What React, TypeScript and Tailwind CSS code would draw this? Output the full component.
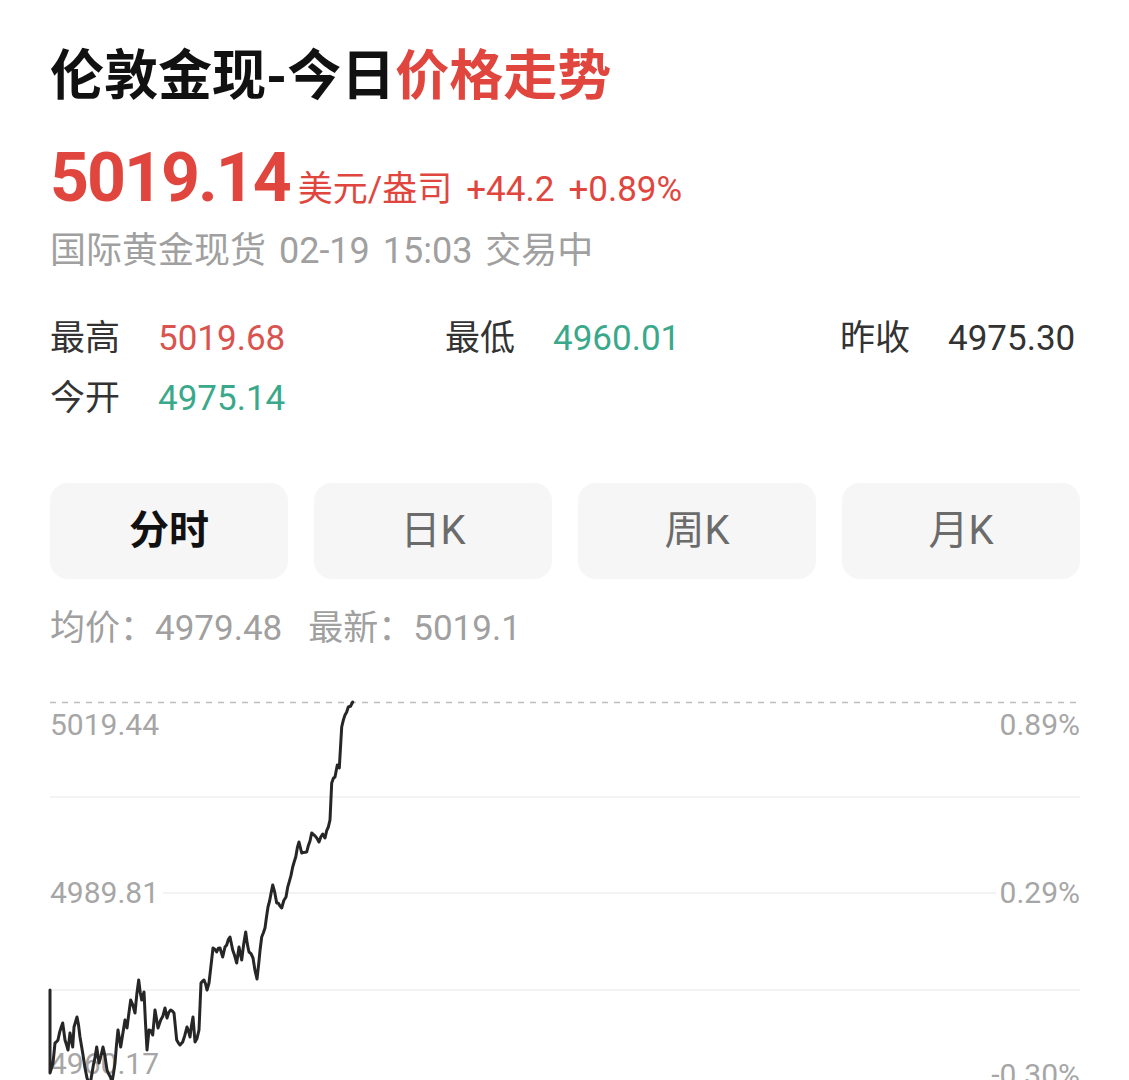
import React from 'react';

const font = { fontFamily: 'Roboto, "Noto Sans CJK SC", sans-serif' };

// chart trace, svg coords (x from left edge of chart, y from the dashed top line)
const trace: [number, number][] = [
  [0, 288], [0, 371], [3, 361], [5, 341], [8, 338], [12.7, 321], [15, 338], [18, 348],
  [20, 331], [22.7, 345], [24, 325], [27, 315], [30, 335], [32.7, 351], [37, 376], [40, 383],
  [46.7, 345], [49, 361], [53, 345], [57, 368], [62, 380], [65, 361], [68, 328], [70.7, 345],
  [75, 318], [77, 326], [80.7, 298], [85, 311], [88.7, 278], [91.7, 298], [94, 290], [97, 348],
  [99, 328], [102.7, 333], [105, 308], [108, 326], [110.7, 318], [115, 306], [117, 316],
  [120.7, 308], [124, 311], [126.7, 338], [130, 343], [132.7, 340], [137, 325], [140, 335],
  [143, 315], [145, 340], [149, 328], [151, 281], [154, 278], [157, 288], [159, 281],
  [163, 246], [166.7, 250], [170, 246], [172.7, 255], [175, 245], [180, 235], [182.7, 248],
  [186.7, 261], [189, 245], [191.7, 258], [195.7, 230], [199, 250], [203, 256], [207, 277],
  [211.7, 235], [215, 226], [218, 205], [222.7, 183], [226.7, 201], [231.7, 206], [236, 195],
  [242.7, 165], [249, 140], [251.7, 151], [256.7, 150], [261.7, 131], [266, 135], [269, 140],
  [272.7, 132], [275, 136], [280, 118], [281.7, 81], [285, 75], [287.3, 63], [289.3, 66],
  [291.7, 25], [295, 13], [298.3, 5], [302.7, 0],
];

function jittered(points: [number, number][]) {
  let seed = 7;
  const rand = () => {
    seed = (seed * 9301 + 49297) % 233280;
    return seed / 233280 - 0.5;
  };
  const out: [number, number][] = [];
  for (let i = 0; i < points.length - 1; i++) {
    const [x1, y1] = points[i];
    const [x2, y2] = points[i + 1];
    out.push([x1, y1]);
    const steps = Math.max(1, Math.floor((x2 - x1) / 1.5));
    for (let s = 1; s < steps; s++) {
      const t = s / steps;
      out.push([x1 + (x2 - x1) * t, y1 + (y2 - y1) * t + rand() * 5]);
    }
  }
  out.push(points[points.length - 1]);
  return out.map(([x, y]) => `${x.toFixed(1)},${Math.min(y, 390).toFixed(1)}`).join(' ');
}

const tabs = ['分时', '日K', '周K', '月K'];

function Stat({ label, value, color }: { label: string; value: string; color: string }) {
  return (
    <div className="flex items-center gap-[38px]">
      <span className="text-[#333333]">{label}</span>
      <span className={color}>{value}</span>
    </div>
  );
}

function Chart() {
  const line = jittered(trace);
  return (
    <div className="relative mt-[51px] h-[380px]">
      <svg width="1030" height="380" className="absolute left-0 top-0 overflow-visible">
        <line x1="0" y1="0.5" x2="1030" y2="0.5" stroke="#bdbdbd" strokeWidth="1.5" strokeDasharray="6 6" />
        <line x1="0" y1="95" x2="1030" y2="95" stroke="#efefef" strokeWidth="1.5" />
        <line x1="0" y1="191" x2="1030" y2="191" stroke="#efefef" strokeWidth="1.5" />
        <line x1="0" y1="288" x2="1030" y2="288" stroke="#efefef" strokeWidth="1.5" />
      </svg>
      <div className="absolute left-0 top-[3px] text-[30px] leading-[40px] text-[#a6a6a6]">5019.44</div>
      <div className="absolute right-0 top-[3px] text-[30px] leading-[40px] text-[#a6a6a6]">0.89%</div>
      <div className="absolute left-0 top-[171px] bg-white pr-1 text-[30px] leading-[40px] text-[#a6a6a6]">4989.81</div>
      <div className="absolute right-0 top-[171px] bg-white pl-1 text-[30px] leading-[40px] text-[#a6a6a6]">0.29%</div>
      <div className="absolute left-0 top-[342px] text-[30px] leading-[40px] text-[#a6a6a6]">4960.17</div>
      <div className="absolute right-0 top-[353px] text-[30px] leading-[40px] text-[#a6a6a6]">-0.30%</div>
      <svg width="1030" height="380" className="absolute left-0 top-0 overflow-visible">
        <polyline points={line} fill="none" stroke="#262626" strokeWidth="3" strokeLinejoin="round" strokeLinecap="round" />
      </svg>
    </div>
  );
}

export default function App() {
  return (
    <div className="h-[1080px] w-[1129px] overflow-hidden bg-white pl-[50px] pr-[49px]" style={font}>
      <h1 className="pt-[47px] text-[54px] font-bold leading-[60px] text-[#111111]">
        伦敦金现-今日<span className="text-[#e0463e]">价格走势</span>
      </h1>

      <div className="mt-[36px] flex items-baseline text-[#e0463e]">
        <span className="text-[68px] font-bold leading-[70px] tracking-[-2px]">5019.14</span>
        <span className="ml-[8px] text-[35px]">美元/盎司</span>
        <span className="ml-[14px] text-[35px]">+44.2</span>
        <span className="ml-[14px] text-[35px]">+0.89%</span>
      </div>

      <div className="mt-[12px] text-[36px] leading-[44px] text-[#a0a0a0] [word-spacing:4px]">
        国际黄金现货 02-19 15:03 交易中
      </div>

      <div className="mt-[44px] grid grid-cols-[395px_395px_1fr] gap-y-[16px] text-[35px] leading-[44px]">
        <Stat label="最高" value="5019.68" color="text-[#d9534f]" />
        <Stat label="最低" value="4960.01" color="text-[#3aa98b]" />
        <Stat label="昨收" value="4975.30" color="text-[#333333]" />
        <Stat label="今开" value="4975.14" color="text-[#3aa98b]" />
      </div>

      <div className="mt-[62px] grid grid-cols-4 gap-[26px]">
        {tabs.map((t, i) => (
          <div
            key={t}
            className={
              i === 0
                ? 'flex h-[96px] items-center justify-center rounded-[18px] bg-[#f6f6f6] text-[40px] font-bold text-[#111111]'
                : 'flex h-[96px] items-center justify-center rounded-[18px] bg-[#f6f6f6] text-[40px] text-[#6b6b6b]'
            }
          >
            {t}
          </div>
        ))}
      </div>

      <div className="mt-[28px] flex text-[35px] leading-[44px] text-[#a0a0a0]">
        <span>均价：4979.48</span>
        <span className="ml-[26px]">最新：5019.1</span>
      </div>

      <Chart />
    </div>
  );
}
